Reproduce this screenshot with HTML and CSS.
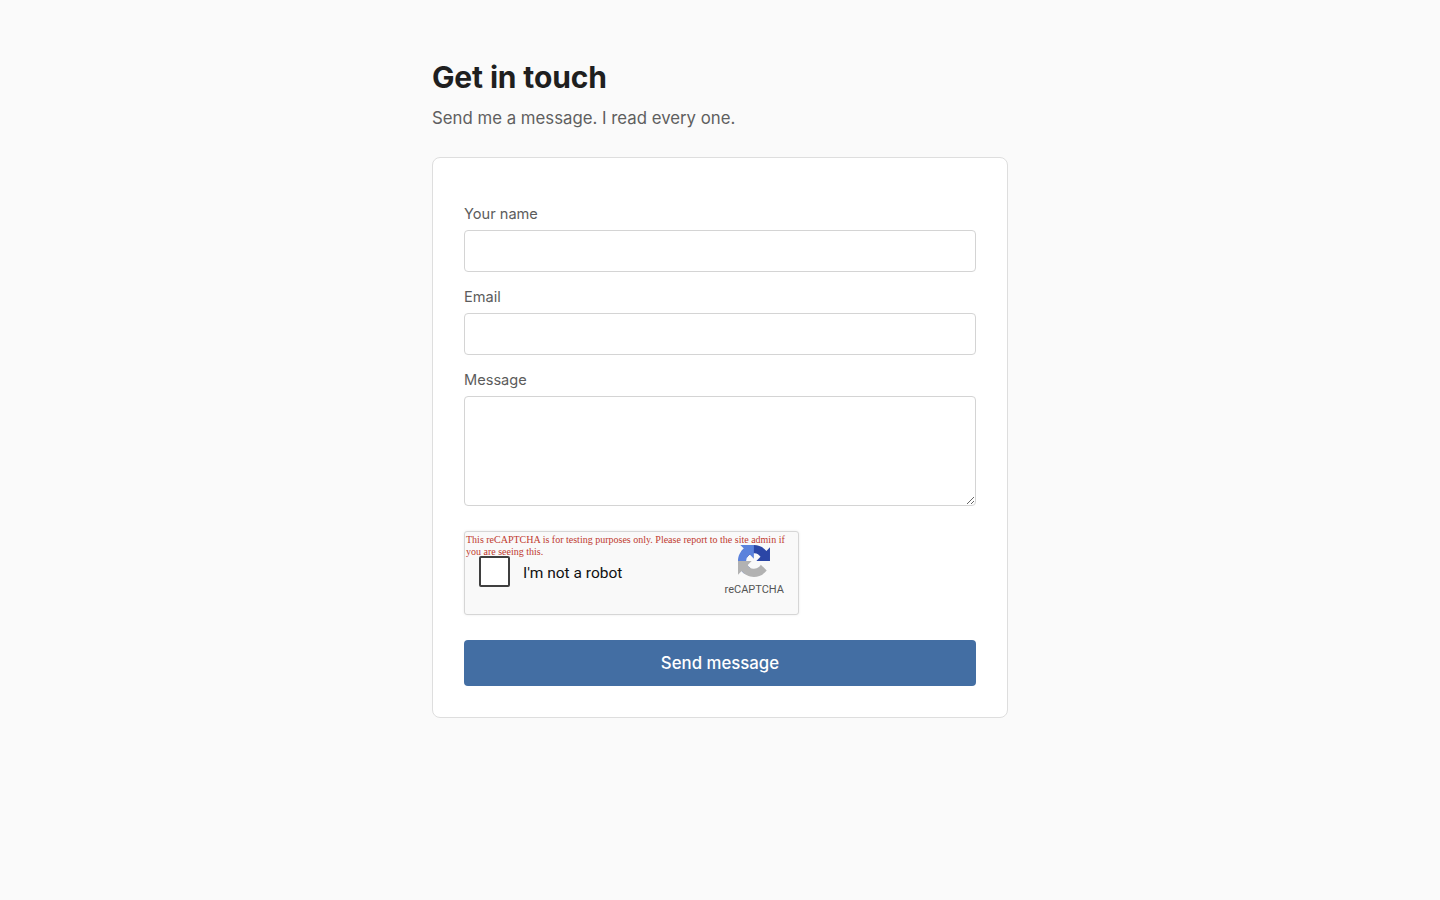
FILE: index.html
```html
<!DOCTYPE html>
<html lang="en">

<head>
    <meta charset="UTF-8">
    <meta name="viewport" content="width=device-width, initial-scale=1.0">
    <title>Get in touch</title>
    <link rel="stylesheet" href="styles.css">
</head>

<body>

    <main class="page">
        <h1 class="title">Get in touch</h1>
        <p class="subtitle">Send me a message. I read every one.</p>

        <form class="card">
            <label class="label" for="name">Your name</label>
            <input class="field" id="name" type="text">

            <label class="label" for="email">Email</label>
            <input class="field" id="email" type="email">

            <label class="label" for="message">Message</label>
            <textarea class="field field-area" id="message"></textarea>

            <!-- captcha widget -->
            <div class="captcha">
                <p class="captcha-warning">This reCAPTCHA is for testing purposes only. Please report to the site admin if you are seeing this.</p>
                <span class="captcha-box"></span>
                <span class="captcha-text">I'm not a robot</span>
                <div class="captcha-brand">
                    <svg class="captcha-logo" viewBox="0 0 64 64" aria-hidden="true">
                        <path d="M64 31.955l-.033-1.37V4.687l-7.16 7.16C50.948 4.674 42.033.093 32.05.093c-10.4 0-19.622 4.96-25.458 12.64l11.736 11.86a15.55 15.55 0 0 1 4.754-5.334c2.05-1.6 4.952-2.906 8.967-2.906.485 0 .86.057 1.135.163 4.976.393 9.288 3.14 11.828 7.124l-8.307 8.307c10.522-.04 22.4-.066 27.295.006" fill="#2b46a6" />
                        <path d="M31.862.001l-1.37.033H4.594l7.16 7.16C4.58 13.05 0 21.967 0 31.95c0 10.4 4.96 19.622 12.64 25.458l11.86-11.736a15.55 15.55 0 0 1-5.334-4.754c-1.6-2.05-2.906-4.952-2.906-8.967 0-.485.057-.86.163-1.135.393-4.976 3.14-9.288 7.124-11.828l8.307 8.307c-.04-10.522-.066-22.4.006-27.295" fill="#5b82dc" />
                        <path d="M0 32l.033 1.37v25.898l7.16-7.16c5.86 7.173 14.774 11.754 24.76 11.754 10.4 0 19.622-4.96 25.458-12.64L45.674 39.36a15.55 15.55 0 0 1-4.754 5.334c-2.05 1.6-4.952 2.906-8.967 2.906-.485 0-.86-.057-1.135-.163-4.976-.393-9.288-3.14-11.828-7.124l8.307-8.307C17.775 32.046 5.896 32.072 1 32" fill="#b2b2b2" />
                    </svg>
                    <span class="captcha-name">reCAPTCHA</span>
                </div>
            </div>

            <button class="submit" type="button">Send message</button>
        </form>
    </main>

</body>

</html>
```

FILE: styles.css
```css
html,
body {
    height: 100%;
    margin: 0;
    background-color: #fafafa;
    font-family: Inter, "Liberation Sans", sans-serif;
}

.page {
    width: 576px;
    margin: 0 auto;
    padding-top: 59px;
}

.title {
    margin: 0;
    font-size: 30px;
    line-height: 36px;
    font-weight: 700;
    letter-spacing: -0.15px;
    color: #1f1f1f;
}

.subtitle {
    margin: 10px 0 26px;
    font-size: 16.8px;
    line-height: 26px;
    color: #5f5f5f;
}

/* form card */
.card {
    display: flex;
    flex-direction: column;
    height: 561px;
    box-sizing: border-box;
    padding: 46px 31px 0;
    background-color: #fff;
    border: 1px solid #dedede;
    border-radius: 8px;
}

.label {
    font-size: 14.6px;
    line-height: 20px;
    color: #5c5c5c;
    margin-bottom: 6px;
}

.field {
    display: block;
    box-sizing: border-box;
    width: 100%;
    height: 42px;
    margin: 0 0 15px;
    padding: 8px 12px;
    background-color: #fff;
    border: 1px solid #d4d4d4;
    border-radius: 4px;
    font: inherit;
}

.field-area {
    height: 110px;
    margin-bottom: 25px;
    resize: vertical;
}

/* captcha */
.captcha {
    position: relative;
    display: flex;
    align-items: center;
    box-sizing: border-box;
    width: 335px;
    height: 84px;
    margin-bottom: 25px;
    padding: 0 14px;
    background-color: #f9f9f9;
    border: 1px solid #d6d6d6;
    border-radius: 3px;
    box-shadow: 0 0 3px rgba(0, 0, 0, 0.08);
}

.captcha-warning {
    position: absolute;
    top: 2px;
    left: 1px;
    right: 8px;
    margin: 0;
    font-family: "Liberation Serif", serif;
    font-size: 10px;
    line-height: 12px;
    color: #c0392f;
}

.captcha-box {
    flex: none;
    box-sizing: border-box;
    width: 31px;
    height: 31px;
    margin-right: 13px;
    margin-bottom: 4px;
    background-color: #fff;
    border: 2px solid #3f3f3f;
    border-radius: 2px;
}

.captcha-text {
    font-family: Roboto, "Liberation Sans", sans-serif;
    font-size: 15.5px;
    line-height: 20px;
    color: #111;
}

.captcha-brand {
    display: flex;
    flex-direction: column;
    align-items: center;
    margin-left: auto;
    padding-bottom: 4px;
}

.captcha-logo {
    width: 32px;
    height: 32px;
    margin-bottom: 6px;
}

.captcha-name {
    font-family: Roboto, "Liberation Sans", sans-serif;
    font-size: 11px;
    line-height: 14px;
    color: #555;
}

.submit {
    display: block;
    width: 100%;
    height: 46px;
    padding: 0;
    background-color: #436ea3;
    border: none;
    border-radius: 4px;
    color: #fff;
    font: inherit;
    font-size: 16.8px;
    font-weight: 500;
}
```
